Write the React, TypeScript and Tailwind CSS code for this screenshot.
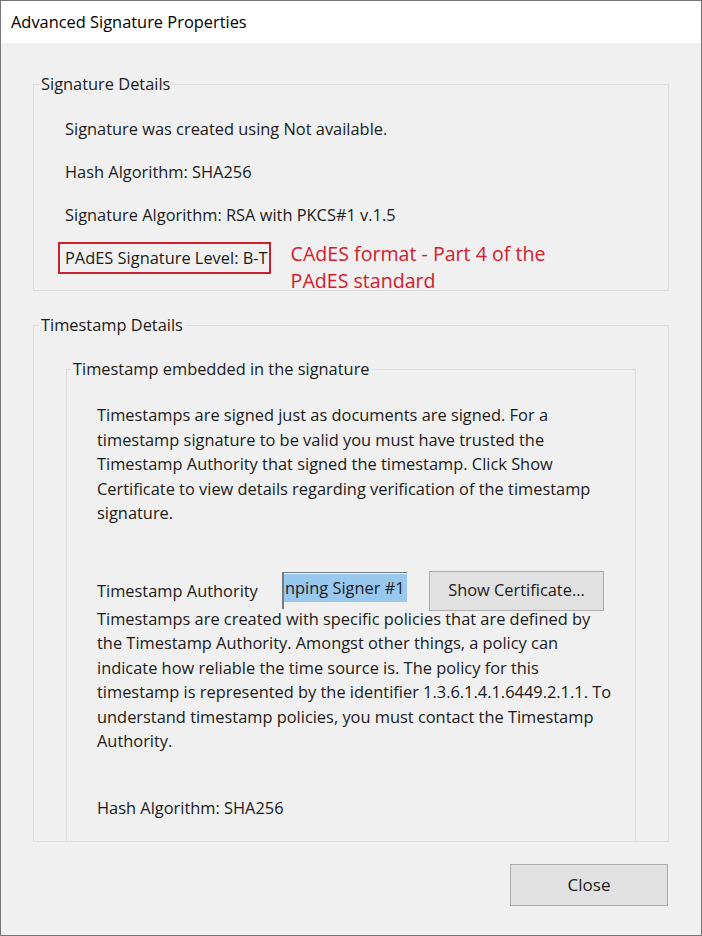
import React from 'react';

const Line: React.FC<{ children: React.ReactNode; className?: string }> = ({ children, className = '' }) => (
  <div className={`whitespace-nowrap h-[24.5px] leading-[24.5px] ${className}`}>{children}</div>
);

export default function App() {
  return (
    <div className="w-[702px] h-[936px] border border-[#767676] bg-[#f0f0f0] text-[#1b1b1b] font-['Open_Sans',sans-serif] text-[16.4px] overflow-hidden flex flex-col">
      {/* title bar */}
      <div className="h-[42px] bg-white flex items-center pl-[10px] text-[16.4px] text-black shrink-0">
        Advanced Signature Properties
      </div>

      <div className="flex flex-col px-[32px] pt-[30px]">
        {/* signature details */}
        <fieldset className="border border-[#dcdcdc] h-[218px] px-[31px] pt-[13px]">
          <legend className="-ml-[26px] px-[2px] leading-[22px]">Signature Details</legend>
          <div className="flex flex-col">
            <div className="h-[43px] flex items-center">Signature was created using Not available.</div>
            <div className="h-[43px] flex items-center">Hash Algorithm: SHA256</div>
            <div className="h-[43px] flex items-center">Signature Algorithm: RSA with PKCS#1 v.1.5</div>
            <div className="flex items-start">
              <div className="-ml-[7px] mt-[5px] h-[32px] border-2 border-[#c9212e] pl-[5px] pr-[1px] flex items-center whitespace-nowrap">
                PAdES Signature Level: B-T
              </div>
              <div className="ml-[20px] mt-[3px] text-[#d0202c] text-[19.6px] leading-[27px] whitespace-nowrap">
                CAdES format - Part 4 of the
                <br />
                PAdES standard
              </div>
            </div>
          </div>
        </fieldset>

        {/* timestamp details */}
        <fieldset className="mt-[23px] border border-[#dcdcdc] h-[528px] overflow-hidden px-[32px] pt-[22px]">
          <legend className="-ml-[27px] px-[2px] leading-[22px]">Timestamp Details</legend>
          <fieldset className="border border-[#dcdcdc] h-[520px] pl-[30px] pt-[23px]">
            <legend className="-ml-[26px] px-[2px] leading-[22px]">Timestamp embedded in the signature</legend>
            <div className="flex flex-col">
              <Line>Timestamps are signed just as documents are signed. For a</Line>
              <Line>timestamp signature to be valid you must have trusted the</Line>
              <Line>Timestamp Authority that signed the timestamp. Click Show</Line>
              <Line>Certificate to view details regarding verification of the timestamp</Line>
              <Line>signature.</Line>

              <div className="mt-[45px] flex items-center h-[40px]">
                <div className="w-[185px] whitespace-nowrap pt-[2px]">Timestamp Authority</div>
                <div className="w-[125px] h-[37px] border-t border-l border-[#7a7a7a] border-l-2 overflow-hidden pt-[1px]">
                  <div className="bg-[#99c8ef] h-[28px] leading-[28px] whitespace-nowrap pl-[1px]">nping Signer #1</div>
                </div>
                <button className="ml-[22px] w-[175px] h-[40px] bg-[#e1e1e1] border border-[#adadad] text-[16.4px]">
                  Show Certificate...
                </button>
              </div>

              <div className="mt-[-4px] flex flex-col">
                <Line>Timestamps are created with specific policies that are defined by</Line>
                <Line>the Timestamp Authority. Amongst other things, a policy can</Line>
                <Line>indicate how reliable the time source is. The policy for this</Line>
                <Line>timestamp is represented by the identifier 1.3.6.1.4.1.6449.2.1.1. To</Line>
                <Line>understand timestamp policies, you must contact the Timestamp</Line>
                <Line>Authority.</Line>
              </div>

              <Line className="mt-[42px]">Hash Algorithm: SHA256</Line>
            </div>
          </fieldset>
        </fieldset>

        <div className="flex justify-end mt-[22px] pr-[1px]">
          <button className="w-[158px] h-[42px] bg-[#e1e1e1] border border-[#adadad] text-[17px]">Close</button>
        </div>
      </div>
    </div>
  );
}
